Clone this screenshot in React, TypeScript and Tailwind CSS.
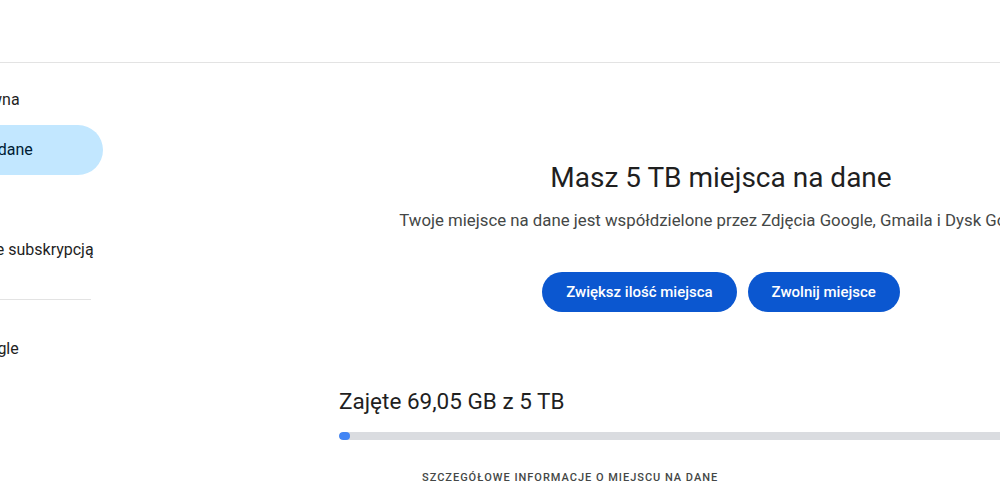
import { useState } from 'react';

const navItems = [
  { id: 'home', label: 'Strona główna' },
  { id: 'storage', label: 'Miejsce na dane' },
  { id: 'benefits', label: 'Korzyści' },
  { id: 'subscription', label: 'Zarządzanie subskrypcją' },
];

const App = () => {
  const [active, setActive] = useState('storage');
  const usedPercent = 1.4;

  return (
    <div className="w-[1000px] h-[499px] overflow-hidden bg-white text-[#1f1f1f] font-['Roboto','Noto_Sans',sans-serif]">
      <header className="h-[63px] border-b border-[#e3e3e3]" />

      <div className="flex">
        {/* Sidebar, scrolled partly out of view on the left */}
        <nav className="-ml-[107px] w-[210px] shrink-0 pt-3">
          {navItems.map((item) => (
            <button
              key={item.id}
              onClick={() => setActive(item.id)}
              className={`flex h-[50px] w-full items-center rounded-r-full pl-6 text-left text-[16px] whitespace-nowrap ${
                active === item.id ? 'bg-[#c2e7ff] text-[#001d35]' : 'text-[#1f1f1f]'
              }`}
            >
              {item.label}
            </button>
          ))}
          <div className="my-6 mr-3 h-px bg-[#e3e3e3]" />
          <button className="flex h-[50px] w-full items-center pl-6 text-left text-[16px] whitespace-nowrap text-[#1f1f1f]">
            Więcej Google
          </button>
        </nav>

        {/* Main */}
        <main className="ml-[236px] w-[764px] shrink-0 pt-[97px]">
          <div className="flex flex-col items-center text-center">
            <h1 className="text-[28px] leading-[36px] text-[#1f1f1f]">Masz 5 TB miejsca na dane</h1>
            <p className="mt-3 text-[16.8px] leading-6 text-[#444746] whitespace-nowrap">
              Twoje miejsce na dane jest współdzielone przez Zdjęcia Google, Gmaila i Dysk Google.
            </p>
            <div className="mt-10 flex gap-[11px]">
              <button className="h-10 rounded-full bg-[#0b57d0] px-6 text-[15px] font-medium text-white">
                Zwiększ ilość miejsca
              </button>
              <button className="h-10 rounded-full bg-[#0b57d0] px-6 text-[15px] font-medium text-white">
                Zwolnij miejsce
              </button>
            </div>
          </div>

          <div className="mt-[75px]">
            <h2 className="text-[22.5px] leading-7 text-[#1f1f1f]">Zajęte 69,05 GB z 5 TB</h2>
            <div className="mt-[17px] h-2 w-full overflow-hidden rounded-full bg-[#dadce0]">
              <div className="h-full rounded-full bg-[#4285f4]" style={{ width: `${usedPercent}%` }} />
            </div>
            <p className="mt-[30px] pl-[83px] text-[11px] leading-4 font-medium tracking-[0.09em] text-[#444746]">
              SZCZEGÓŁOWE INFORMACJE O MIEJSCU NA DANE
            </p>
          </div>
        </main>
      </div>
    </div>
  );
};

export default App;
